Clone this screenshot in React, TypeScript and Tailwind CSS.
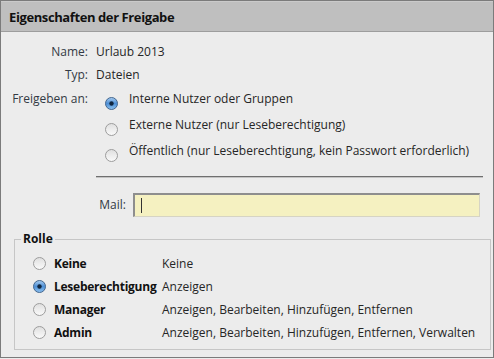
import React from "react";

function Radio({ checked = false }: { checked?: boolean }) {
  const id = checked ? "rsel" : "run";
  return (
    <svg width="13" height="13" viewBox="0 0 13 13" className="shrink-0 block">
      <defs>
        <linearGradient id={id + "f"} x1="0" y1="0" x2="0" y2="1">
          {checked ? (
            <>
              <stop offset="0" stopColor="#a9cdf0" />
              <stop offset="0.5" stopColor="#4d8fd6" />
              <stop offset="1" stopColor="#8fc3f0" />
            </>
          ) : (
            <>
              <stop offset="0" stopColor="#dedede" />
              <stop offset="0.5" stopColor="#ededed" />
              <stop offset="1" stopColor="#fafafa" />
            </>
          )}
        </linearGradient>
      </defs>
      <circle cx="6.5" cy="6.5" r="6" fill={`url(#${id}f)`} stroke={checked ? "#44678e" : "#9c9c9c"} strokeWidth="1" />
      {checked && <circle cx="6.5" cy="6.5" r="2.2" fill="#10263f" />}
    </svg>
  );
}

const roles = [
  { name: "Keine", desc: "Keine", checked: false },
  { name: "Leseberechtigung", desc: "Anzeigen", checked: true },
  { name: "Manager", desc: "Anzeigen, Bearbeiten, Hinzufügen, Entfernen", checked: false },
  { name: "Admin", desc: "Anzeigen, Bearbeiten, Hinzufügen, Entfernen, Verwalten", checked: false },
];

const shares = [
  { label: "Interne Nutzer oder Gruppen", checked: true },
  { label: "Externe Nutzer (nur Leseberechtigung)", checked: false },
  { label: "Öffentlich (nur Leseberechtigung, kein Passwort erforderlich)", checked: false },
];

export default function App() {
  return (
    <div className="w-[494px] h-[359px] bg-[#ececec]">
      <div className="w-[494px] h-[358px] border border-[#7b7b7b] bg-[#ececec] text-[12px] leading-[16px] text-[#262626] font-['Open_Sans',sans-serif] overflow-hidden">
        <div className="h-[31px] bg-[#bfbfbf] border-t border-t-[#cacaca] border-b border-b-[#9d9d9d] flex items-center pl-[8px] font-bold text-[13px] tracking-[-0.4px] text-[#111]">
          Eigenschaften der Freigabe
        </div>
        <div className="pt-[12px]">
          <div className="flex">
            <div className="w-[87px] text-right text-[#333a44]">Name:</div>
            <div className="ml-[8px]">Urlaub 2013</div>
          </div>
          <div className="flex mt-[7px]">
            <div className="w-[87px] text-right text-[#333a44]">Typ:</div>
            <div className="ml-[8px]">Dateien</div>
          </div>
          <div className="flex mt-[8px]">
            <div className="w-[87px] text-right text-[#333a44]">Freigeben an:</div>
            <div className="ml-[17px] flex flex-col">
              {shares.map((s) => (
                <div key={s.label} className="h-[26px] flex items-start">
                  <div className="mt-[6px]">
                    <Radio checked={s.checked} />
                  </div>
                  <span className="ml-[11px]">{s.label}</span>
                </div>
              ))}
            </div>
          </div>
          <div className="ml-[95px] w-[387px] mt-[7px] h-px bg-[#6f6f6f] border-b border-b-[#c4c4c4] box-content" />
          <div className="flex items-center mt-[15px]">
            <div className="w-[125px] text-right text-[#333a44]">Mail:</div>
            <div className="ml-[7px] w-[347px] h-[24px] bg-[#f5f1c1] border-t-2 border-l-2 border-t-[#8e8e8e] border-l-[#8e8e8e] border-r border-b border-r-[#d6d4c4] border-b-[#d6d4c4] flex items-center pl-[6px]">
              <div className="w-px h-[15px] bg-[#333]" />
            </div>
          </div>
          <fieldset className="ml-[13px] mr-[2px] mt-[14px] border border-[#c6c6c6] pb-[5px] pt-[5px]">
            <legend className="ml-[6px] px-[2px] font-bold text-[#111]">Rolle</legend>
            {roles.map((r) => (
              <div key={r.name} className="h-[23px] flex items-center">
                <div className="ml-[18px]">
                  <Radio checked={r.checked} />
                </div>
                <span className="ml-[8px] w-[108px] font-bold tracking-[-0.25px] text-[#111]">{r.name}</span>
                <span>{r.desc}</span>
              </div>
            ))}
          </fieldset>
        </div>
      </div>
    </div>
  );
}
